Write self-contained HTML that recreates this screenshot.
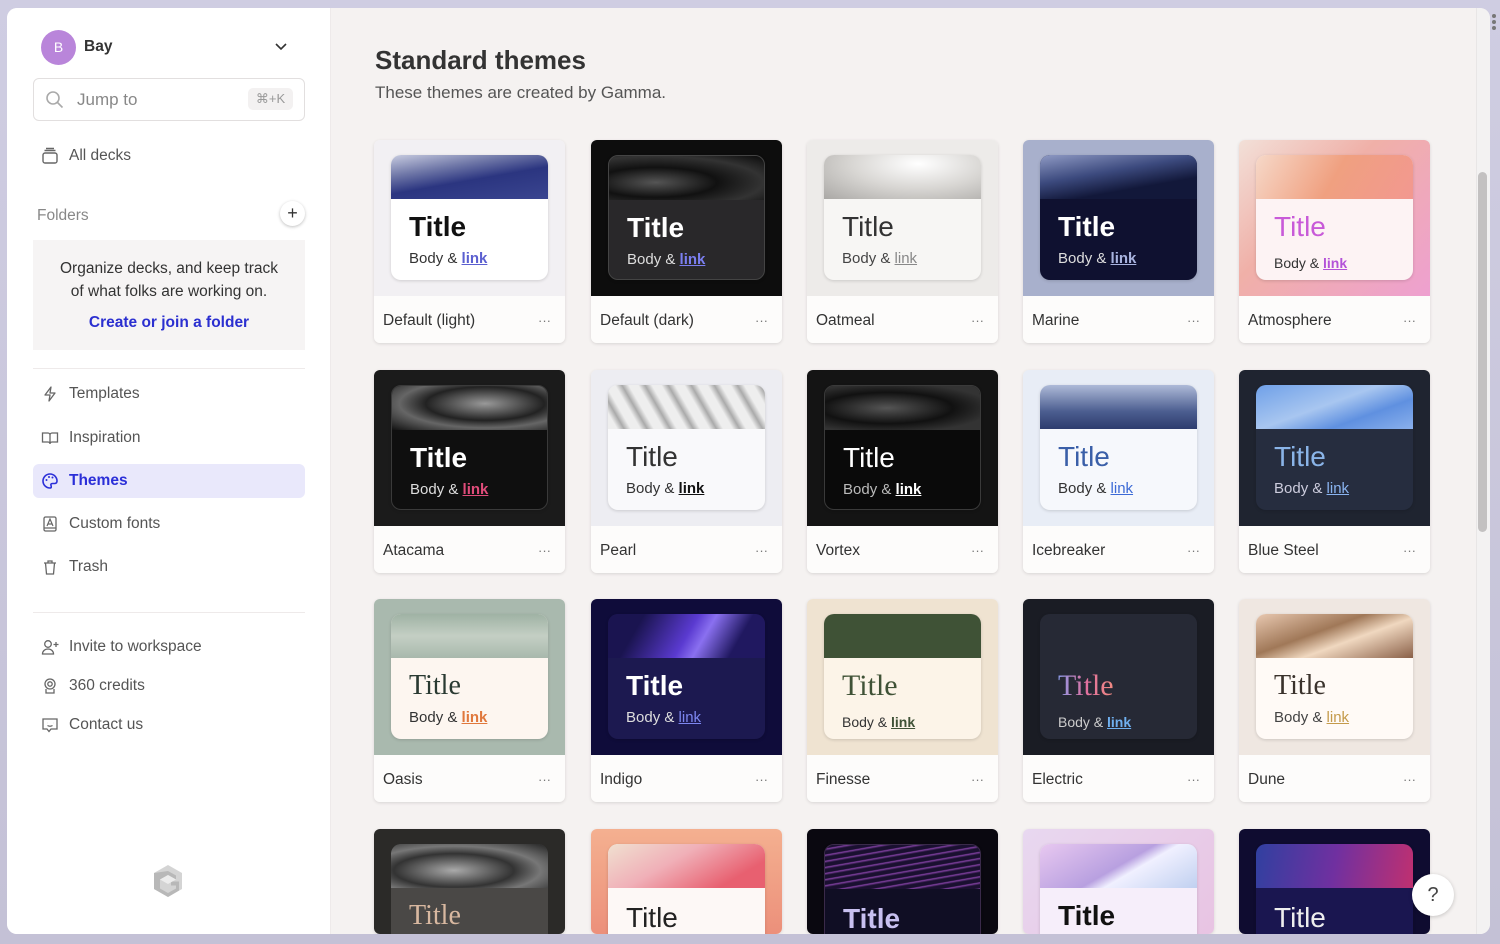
<!DOCTYPE html>
<html style="overflow:hidden"><head><meta charset="utf-8">
<style>
*{box-sizing:border-box;margin:0;padding:0}
body{width:1500px;height:944px;overflow:hidden;background:linear-gradient(180deg,#cfcde2,#c4c1d6);font-family:"Liberation Sans",sans-serif;position:relative}
.win{position:absolute;left:7px;top:8px;width:1483px;height:926px;border-radius:10px;overflow:hidden;background:#f5f2f1}
.side{position:absolute;left:0;top:0;width:324px;height:926px;background:#fff;border-right:1px solid #eeeaea}
.ab{position:absolute}
.nav{position:absolute;left:26px;width:272px;height:34px;display:flex;align-items:center;font-size:15.5px;color:#555;}
.nav svg{position:absolute;left:8px}
.nav span{position:absolute;left:36px}
.card{position:absolute;width:191px;height:203px;border-radius:6px;overflow:hidden;box-shadow:0 1px 3px rgba(0,0,0,.12)}
.pv{position:absolute;left:0;top:0;width:191px;height:156px}
.in{position:absolute;left:17px;top:15px;width:157px;height:125px;border-radius:10px;overflow:hidden;box-shadow:0 1px 3px rgba(0,0,0,.15)}
.img{position:absolute;left:0;top:0;width:100%;height:44px}
.t{position:absolute;left:18px;top:56px;font-size:28px;line-height:32px}
.b{position:absolute;left:18px;top:95px;font-size:15px;line-height:18px}
.b u{font-weight:bold}
.ft{position:absolute;left:0;top:156px;width:191px;height:47px;background:#fdfcfb;font-size:15.5px;color:#333}
.ft span{position:absolute;left:9px;top:16px}
.ft i{position:absolute;right:14px;top:17px;font-style:normal;color:#777;font-size:13px}
.serif{font-family:"Liberation Serif",serif}
</style></head><body>
<div class="ab" style="left:1492px;top:14px;width:4px;height:4px;border-radius:2px;background:#777;box-shadow:0 6px 0 #777,0 12px 0 #777"></div>
<div class="win">
<div class="side">
  <div class="ab" style="left:34px;top:22px;width:35px;height:35px;border-radius:50%;background:#b985da;color:#fff;font-size:14px;text-align:center;line-height:35px">B</div>
  <div class="ab" style="left:77px;top:30px;font-size:15.5px;font-weight:bold;color:#333">Bay</div>
  <svg class="ab" style="left:267px;top:33px" width="14" height="10" viewBox="0 0 14 10"><path d="M2 3l5 5 5-5" fill="none" stroke="#333" stroke-width="1.6"/></svg>
  <div class="ab" style="left:26px;top:70px;width:272px;height:43px;border:1px solid #e2dfdf;border-radius:6px"></div>
  <svg class="ab" style="left:38px;top:82px" width="20" height="20" viewBox="0 0 20 20"><circle cx="8" cy="8" r="6" fill="none" stroke="#aaa" stroke-width="1.6"/><path d="M12.5 12.5l5 5" stroke="#aaa" stroke-width="1.6"/></svg>
  <div class="ab" style="left:70px;top:82px;font-size:17px;color:#888">Jump to</div>
  <div class="ab" style="left:241px;top:80px;width:45px;height:22px;border-radius:5px;background:#f3f1f1;color:#999;font-size:13px;text-align:center;line-height:22px">⌘+K</div>
  <svg class="ab" style="left:34px;top:139px" width="18" height="18" viewBox="0 0 18 18"><rect x="2" y="6" width="14" height="10" rx="2" fill="none" stroke="#666" stroke-width="1.4"/><path d="M3.5 3.5h11M5 1.5h8" stroke="#666" stroke-width="1.4"/></svg>
  <div class="ab" style="left:62px;top:139px;font-size:15.5px;color:#555">All decks</div>
  <div class="ab" style="left:30px;top:199px;font-size:15.5px;color:#888">Folders</div>
  <div class="ab" style="left:273px;top:193px;width:25px;height:25px;border-radius:50%;background:#fff;box-shadow:0 1px 3px rgba(0,0,0,.25);text-align:center;line-height:24px;font-size:18px;color:#333">+</div>
  <div class="ab" style="left:26px;top:232px;width:272px;height:110px;background:#f6f4f4;text-align:center;font-size:15.5px;color:#333;line-height:23px;padding-top:17px">Organize decks, and keep track<br>of what folks are working on.<div style="color:#2b2fd0;font-weight:bold;margin-top:8px">Create or join a folder</div></div>
  <div class="ab" style="left:26px;top:360px;width:272px;height:1px;background:#eeeaea"></div>
  <div class="nav" style="top:369px"><svg width="18" height="18" viewBox="0 0 18 18"><path d="M10 2L4 10h5l-1 6 6-8H9z" fill="none" stroke="#666" stroke-width="1.3" stroke-linejoin="round"/></svg><span>Templates</span></div>
  <div class="nav" style="top:413px"><svg width="18" height="18" viewBox="0 0 18 18"><path d="M1.5 4h5.5a2 2 0 012 2v9a2 2 0 00-2-2H1.5zM16.5 4H11a2 2 0 00-2 2v9a2 2 0 012-2h5.5z" fill="none" stroke="#666" stroke-width="1.3"/></svg><span>Inspiration</span></div>
  <div class="nav" style="top:456px;background:#e9e8fb;border-radius:6px;color:#2b2fd8;font-weight:bold"><svg width="18" height="18" viewBox="0 0 18 18"><path d="M9 2a7 7 0 000 14c1.5 0 1.5-1.5 1-2.5s0-2 1.5-2H14a2.5 2.5 0 002-2.5A7 7 0 009 2z" fill="none" stroke="#2b2fd8" stroke-width="1.6"/><circle cx="5.5" cy="8" r="1" fill="#2b2fd8"/><circle cx="8" cy="5" r="1" fill="#2b2fd8"/><circle cx="11.5" cy="5.5" r="1" fill="#2b2fd8"/></svg><span>Themes</span></div>
  <div class="nav" style="top:499px"><svg width="18" height="18" viewBox="0 0 18 18"><rect x="3" y="2" width="12" height="14" rx="1.5" fill="none" stroke="#666" stroke-width="1.3"/><path d="M6 11l3-7 3 7M7 9h4M3 13h12" fill="none" stroke="#666" stroke-width="1.2"/></svg><span>Custom fonts</span></div>
  <div class="nav" style="top:542px"><svg width="18" height="18" viewBox="0 0 18 18"><path d="M3 5h12M7 5V3h4v2M4.5 5l1 11h7l1-11" fill="none" stroke="#666" stroke-width="1.3"/></svg><span>Trash</span></div>
  <div class="ab" style="left:26px;top:604px;width:272px;height:1px;background:#eeeaea"></div>
  <div class="nav" style="top:622px"><svg width="20" height="18" viewBox="0 0 20 18"><circle cx="7" cy="6" r="3.3" fill="none" stroke="#666" stroke-width="1.3"/><path d="M1.5 16c0-3 2.5-5 5.5-5s5.5 2 5.5 5zM15 4v5M12.5 6.5h5" fill="none" stroke="#666" stroke-width="1.3"/></svg><span>Invite to workspace</span></div>
  <div class="nav" style="top:661px"><svg width="18" height="18" viewBox="0 0 18 18"><circle cx="9" cy="7" r="5" fill="none" stroke="#666" stroke-width="1.3"/><circle cx="9" cy="7" r="2.2" fill="none" stroke="#666" stroke-width="1.3"/><path d="M5 12v4h8v-4" fill="none" stroke="#666" stroke-width="1.3"/></svg><span>360 credits</span></div>
  <div class="nav" style="top:700px"><svg width="18" height="18" viewBox="0 0 18 18"><path d="M2 3h14v10H10l-2 2.5L6 13H2z" fill="none" stroke="#666" stroke-width="1.3"/><path d="M6 7h.1M12 7h.1M6.5 9.5q2.5 1.5 5 0" fill="none" stroke="#666" stroke-width="1.3"/></svg><span>Contact us</span></div>
  <svg class="ab" style="left:144px;top:855px" width="34" height="36" viewBox="0 0 34 36"><path d="M17 2L31 10v16L17 34 3 26V10z" fill="#d4d4d4"/><path d="M17 8l8 4.5v4l-8-4.5-8 4.5v9l8 4.5 8-4.5v-3l-5 0v-4h8v9L17 34 3 26V10z" fill="#b8b8b8"/><path d="M9 16.5l8-4.5 8 4.5-8 4.5z" fill="#ececec"/></svg>
</div>

<div class="ab" style="left:368px;top:37px;font-size:26px;font-weight:bold;color:#333">Standard themes</div>
<div class="ab" style="left:368px;top:75px;font-size:17px;color:#555">These themes are created by Gamma.</div>
<div class="ab" style="left:1469px;top:0;width:14px;height:926px;background:#f3f2f2;border-left:1px solid #e8e6e6"></div>
<div class="ab" style="left:1471px;top:164px;width:9px;height:360px;border-radius:5px;background:#c3c1c1"></div>

<!-- Row 1 -->
<div class="card" style="left:367px;top:132px"><div class="pv" style="background:#f2f0f3"><div class="in" style="background:#fff"><div class="img" style="background:linear-gradient(170deg,#c8cce0 0%,#7078a8 30%,#2b3580 55%,#3a4590 100%)"></div><div class="t" style="font-weight:bold;color:#111">Title</div><div class="b" style="color:#333">Body &amp; <u style="color:#5b5fd0">link</u></div></div></div><div class="ft"><span>Default (light)</span><i>···</i></div></div>
<div class="card" style="left:584px;top:132px"><div class="pv" style="background:#0d0d0d"><div class="in" style="background:#29282a;border:1px solid #444"><div class="img" style="background:radial-gradient(ellipse at 30% 60%,#555,#111 40%,#333 70%,#0a0a0a)"></div><div class="t" style="font-weight:bold;color:#fff">Title</div><div class="b" style="color:#ddd">Body &amp; <u style="color:#7b7ff0">link</u></div></div></div><div class="ft"><span>Default (dark)</span><i>···</i></div></div>
<div class="card" style="left:800px;top:132px"><div class="pv" style="background:#edebe9"><div class="in" style="background:#f7f6f4"><div class="img" style="background:radial-gradient(ellipse at 60% 20%,#fff,#d8d6d3 50%,#aaa8a5)"></div><div class="t" style="color:#333">Title</div><div class="b" style="color:#444">Body &amp; <u style="color:#888;font-weight:normal">link</u></div></div></div><div class="ft"><span>Oatmeal</span><i>···</i></div></div>
<div class="card" style="left:1016px;top:132px"><div class="pv" style="background:#a8b0cc"><div class="in" style="background:#0f1130"><div class="img" style="background:linear-gradient(170deg,#8f9ac4,#3c4a7e 40%,#12183a 70%)"></div><div class="t" style="font-weight:bold;color:#fff">Title</div><div class="b" style="color:#ddd">Body &amp; <u style="color:#a9b4e0">link</u></div></div></div><div class="ft"><span>Marine</span><i>···</i></div></div>
<div class="card" style="left:1232px;top:132px"><div class="pv" style="background:linear-gradient(135deg,#f2e0d8,#f0b0a8 40%,#eea0d0 100%)"><div class="in" style="background:#fdf3f4"><div class="img" style="background:linear-gradient(120deg,#f6d8c8,#f0a080 50%,#f29890)"></div><div class="t" style="color:#c85ad8">Title</div><div class="b" style="color:#333;font-size:14px;top:99px">Body &amp; <u style="color:#b452d8">link</u></div></div></div><div class="ft"><span>Atmosphere</span><i>···</i></div></div>

<!-- Row 2 -->
<div class="card" style="left:367px;top:362px"><div class="pv" style="background:#1b1b1b"><div class="in" style="background:#0f0f0f;border:1px solid #3a3a3a"><div class="img" style="background:radial-gradient(ellipse at 60% 40%,#999,#222 45%,#666 65%,#111)"></div><div class="t" style="font-weight:bold;color:#fff">Title</div><div class="b" style="color:#ddd">Body &amp; <u style="color:#e04c7a">link</u></div></div></div><div class="ft"><span>Atacama</span><i>···</i></div></div>
<div class="card" style="left:584px;top:362px"><div class="pv" style="background:#ededf2"><div class="in" style="background:#f9f9fb"><div class="img" style="background:repeating-linear-gradient(60deg,#eee 0 8px,#aaa 14px,#eee 20px)"></div><div class="t" style="color:#333">Title</div><div class="b" style="color:#333">Body &amp; <u style="color:#111">link</u></div></div></div><div class="ft"><span>Pearl</span><i>···</i></div></div>
<div class="card" style="left:800px;top:362px"><div class="pv" style="background:#141414"><div class="in" style="background:#0a0a0a;border:1px solid #3a3a3a"><div class="img" style="background:radial-gradient(ellipse at 40% 50%,#555,#111 50%,#333 80%)"></div><div class="t" style="color:#fff">Title</div><div class="b" style="color:#bbb">Body &amp; <u style="color:#fff">link</u></div></div></div><div class="ft"><span>Vortex</span><i>···</i></div></div>
<div class="card" style="left:1016px;top:362px"><div class="pv" style="background:#e8edf6"><div class="in" style="background:#f6f8fc"><div class="img" style="background:linear-gradient(180deg,#aebad8,#4c5e90 60%,#2d3c6e)"></div><div class="t" style="color:#3a5fa8">Title</div><div class="b" style="color:#333">Body &amp; <u style="color:#3c6ad6;font-weight:normal">link</u></div></div></div><div class="ft"><span>Icebreaker</span><i>···</i></div></div>
<div class="card" style="left:1232px;top:362px"><div class="pv" style="background:#1f2430"><div class="in" style="background:#262d3f"><div class="img" style="background:linear-gradient(160deg,#6fa0e8,#a8c6f0 45%,#5f90e0 70%,#8ab0ec)"></div><div class="t" style="color:#8ab4e8">Title</div><div class="b" style="color:#ccd">Body &amp; <u style="color:#8ab4f0;font-weight:normal">link</u></div></div></div><div class="ft"><span>Blue Steel</span><i>···</i></div></div>

<!-- Row 3 -->
<div class="card" style="left:367px;top:591px"><div class="pv" style="background:#a9b9ae"><div class="in" style="background:#fdf6f0"><div class="img" style="background:linear-gradient(180deg,#9fb2a4,#c4cfc4 50%,#a8b8ac)"></div><div class="t serif" style="color:#2a3a32">Title</div><div class="b" style="color:#333">Body &amp; <u style="color:#e0783c">link</u></div></div></div><div class="ft"><span>Oasis</span><i>···</i></div></div>
<div class="card" style="left:584px;top:591px"><div class="pv" style="background:#0f0c3a"><div class="in" style="background:#1c1950"><div class="img" style="background:linear-gradient(120deg,#1a1450 20%,#5a3ad0 50%,#8a70f0 60%,#201860 80%)"></div><div class="t" style="font-weight:bold;color:#fff">Title</div><div class="b" style="color:#ddd">Body &amp; <u style="color:#7d86f0;font-weight:normal">link</u></div></div></div><div class="ft"><span>Indigo</span><i>···</i></div></div>
<div class="card" style="left:800px;top:591px"><div class="pv" style="background:#efe3d1"><div class="in" style="background:#fcf4e8"><div class="img" style="background:#3f5236"></div><div class="t serif" style="color:#3f5236;font-size:30px">Title</div><div class="b" style="color:#333;font-size:14px;top:99px">Body &amp; <u style="color:#3f5236">link</u></div></div></div><div class="ft"><span>Finesse</span><i>···</i></div></div>
<div class="card" style="left:1016px;top:591px"><div class="pv" style="background:#1a1c24"><div class="in" style="background:#262935"><div class="img" style="background:#262935"></div><div class="t serif" style="color:#d07ac0;font-size:30px;background:linear-gradient(90deg,#8a9ae8,#e070a0,#f08a80);-webkit-background-clip:text;background-clip:text;-webkit-text-fill-color:transparent">Title</div><div class="b" style="color:#ccc;font-size:14px;top:99px">Body &amp; <u style="color:#6fb0f0">link</u></div></div></div><div class="ft"><span>Electric</span><i>···</i></div></div>
<div class="card" style="left:1232px;top:591px"><div class="pv" style="background:#efe7e1"><div class="in" style="background:#fffaf6"><div class="img" style="background:linear-gradient(160deg,#e8c8b0,#a07858 40%,#f0d8c0 60%,#8a6048)"></div><div class="t serif" style="color:#3a322c">Title</div><div class="b" style="color:#444">Body &amp; <u style="color:#c49a4a;font-weight:normal">link</u></div></div></div><div class="ft"><span>Dune</span><i>···</i></div></div>

<!-- Row 4 -->
<div class="card" style="left:367px;top:821px;height:105px"><div class="pv" style="background:#2b2a28"><div class="in" style="background:#4a4846;box-shadow:none"><div class="img" style="background:radial-gradient(ellipse at 40% 60%,#aaa,#333 45%,#777 65%,#222)"></div><div class="t serif" style="color:#d8b8a0">Title</div></div></div></div>
<div class="card" style="left:584px;top:821px;height:105px"><div class="pv" style="background:linear-gradient(180deg,#f4b090,#e88070)"><div class="in" style="background:#fdf8f6"><div class="img" style="background:linear-gradient(150deg,#f0e0d0,#f0b0b8 40%,#e86070 80%)"></div><div class="t" style="color:#222;top:58px">Title</div></div></div></div>
<div class="card" style="left:800px;top:821px;height:105px"><div class="pv" style="background:#0a0810"><div class="in" style="background:#100e24;border:1px solid #3a2a4a"><div class="img" style="background:repeating-linear-gradient(170deg,#1a1030 0 3px,#8040a0 4px,#1a1030 6px)"></div><div class="t" style="color:#c8c0f0;font-weight:bold;top:58px">Title</div></div></div></div>
<div class="card" style="left:1016px;top:821px;height:105px"><div class="pv" style="background:linear-gradient(135deg,#e8d8f0,#e8c0e0)"><div class="in" style="background:#f6eefa"><div class="img" style="background:linear-gradient(150deg,#e8c8f0,#b8a0e0 50%,#f0f0ff 60%,#c0d0f0)"></div><div class="t" style="color:#111;font-weight:bold;top:56px">Title</div></div></div></div>
<div class="card" style="left:1232px;top:821px;height:105px"><div class="pv" style="background:#0f0c30"><div class="in" style="background:#1a1650"><div class="img" style="background:linear-gradient(100deg,#3040a0,#7030a0 50%,#c03070)"></div><div class="t" style="color:#eee;top:58px">Title</div></div></div></div>

<div class="ab" style="left:1405px;top:866px;width:42px;height:42px;border-radius:50%;background:#fff;box-shadow:0 1px 4px rgba(0,0,0,.2);text-align:center;line-height:42px;font-size:20px;color:#444">?</div>
</div>
</body></html>
